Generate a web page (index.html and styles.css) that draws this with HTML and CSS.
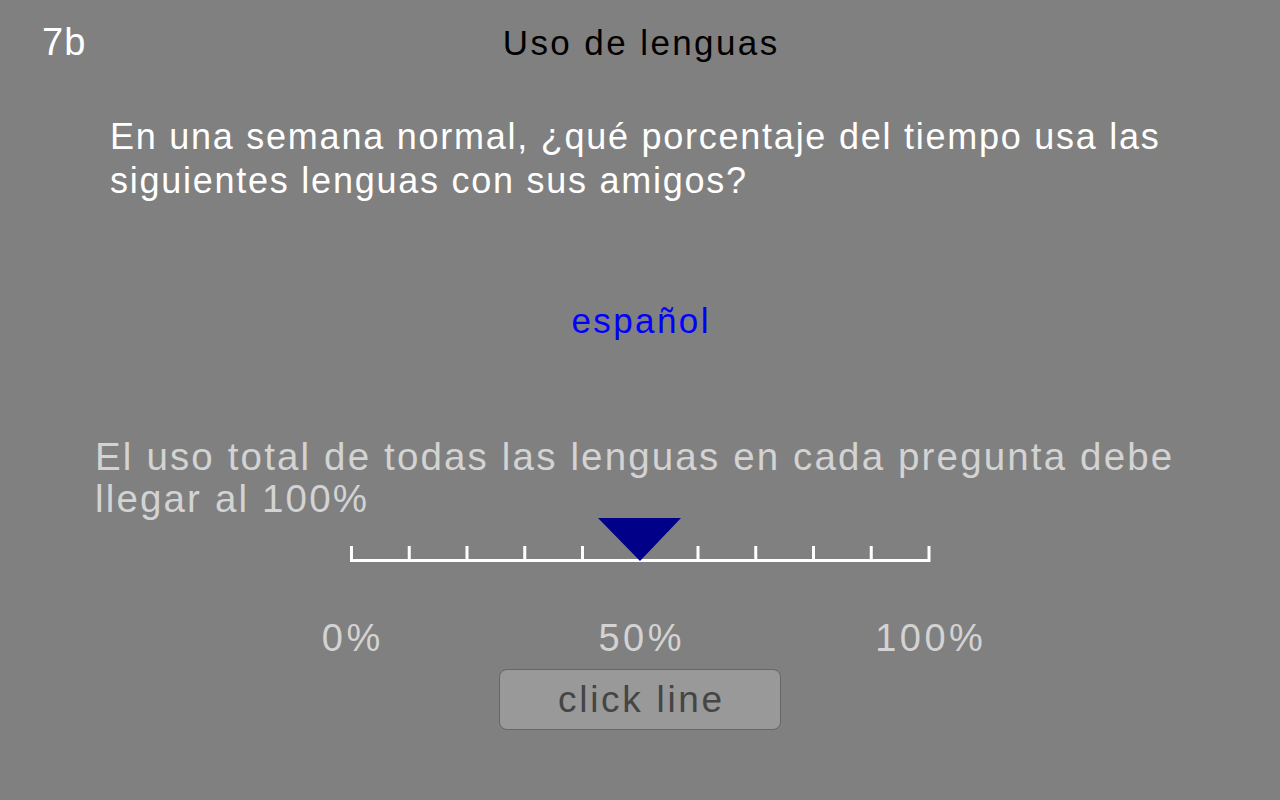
FILE: index.html
```html
<!DOCTYPE html>
<html lang="es">
<head>
  <meta charset="UTF-8" />
  <meta name="viewport" content="width=device-width, initial-scale=1.0"/>
  <title>Uso de lenguas</title>
  <link rel="stylesheet" href="styles.css">
</head>
<body>
  <div class="header">
    <div class="item-num">7b</div>
    <h1>Uso de lenguas</h1>
    <div></div>
  </div>

  <div class="question">En una semana normal, ¿qué porcentaje del tiempo usa las<br>siguientes lenguas con sus amigos?</div>

  <div class="language">español</div>

  <div class="note">El uso total de todas las lenguas en cada pregunta debe<br>llegar al 100%</div>

  <svg class="scale" width="600" height="48" viewBox="0 0 600 48">
    <rect x="10" y="41" width="580" height="3" fill="#fff"/>
    <g id="ticks" fill="#fff"></g>
    <polygon points="258,0 341,0 300,43" fill="#000088"/>
  </svg>

  <div class="labels">
    <span>0%</span>
    <span>50%</span>
    <span>100%</span>
  </div>

  <button class="click-btn">click line</button>

  <script>
    const ticks = document.getElementById('ticks');
    for (let i = 0; i <= 10; i++) {
      const r = document.createElementNS('http://www.w3.org/2000/svg', 'rect');
      r.setAttribute('x', (10 + i * 57.75).toFixed(2));
      r.setAttribute('y', 28);
      r.setAttribute('width', 3);
      r.setAttribute('height', 16);
      ticks.appendChild(r);
    }
  </script>
</body>
</html>
```

FILE: styles.css
```css
body {
  font-family: "Liberation Sans", Arial, sans-serif;
  background: #808080;
  margin: 0;
  padding: 0;
  height: 800px;
  overflow: hidden;
}

.header {
  display: grid;
  grid-template-columns: 1fr auto 1fr;
  align-items: baseline;
  padding: 20px 41px 0;
  line-height: 44px;
}

.item-num {
  color: #fff;
  font-size: 38px;
  letter-spacing: 1px;
  padding-left: 1px;
}

h1 {
  margin: 0;
  color: #000;
  font-size: 35px;
  font-weight: normal;
  letter-spacing: 2.4px;
  padding-left: 2.4px;
}

.question {
  margin: 50px 0 0 110px;
  color: #fff;
  font-size: 36px;
  line-height: 44px;
  letter-spacing: 1.75px;
}

.language {
  margin-top: 98px;
  text-align: center;
  color: #0000ff;
  font-size: 35px;
  line-height: 40px;
  letter-spacing: 2.4px;
  padding-left: 2.4px;
}

.note {
  margin: 95px 0 0 95px;
  color: #d3d3d3;
  font-size: 38.5px;
  line-height: 42px;
  letter-spacing: 2.15px;
}

.scale {
  display: block;
  margin: -2px auto 0;
}

.labels {
  display: flex;
  justify-content: space-between;
  width: 698px;
  margin: 50px auto 0;
  color: #d3d3d3;
  font-size: 38px;
  line-height: 44px;
  letter-spacing: 3.5px;
}

.labels span {
  width: 120px;
  text-align: center;
  padding-left: 3.5px;
  box-sizing: border-box;
}

.click-btn {
  display: block;
  margin: 9px auto 0;
  width: 282px;
  height: 61px;
  padding: 0 0 0 3px;
  background: #999;
  border: 1px solid #666;
  border-radius: 8px;
  color: #454545;
  font-family: "Liberation Sans", Arial, sans-serif;
  font-size: 37px;
  line-height: 59px;
  letter-spacing: 2.7px;
  cursor: pointer;
}
```
